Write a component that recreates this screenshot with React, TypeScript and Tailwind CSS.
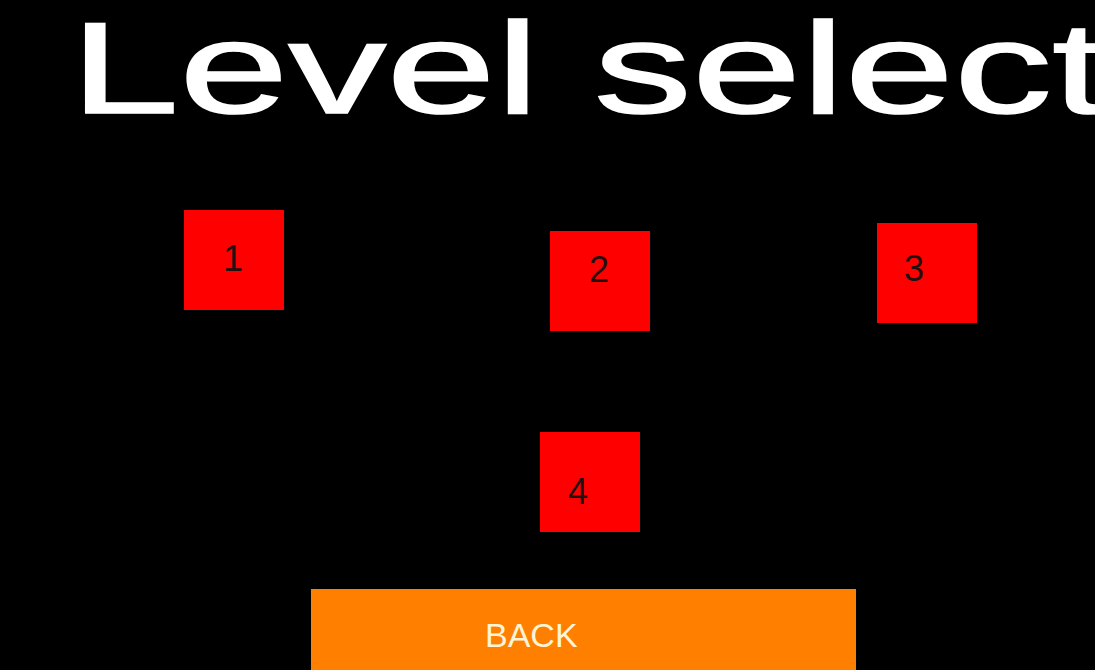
const levels = [
  { id: 1, box: 'left-[184px] top-[60px]', label: 'left-[39px] top-[31px]' },
  { id: 2, box: 'left-[550px] top-[81px]', label: 'left-[39px] top-[21px]' },
  { id: 3, box: 'left-[877px] top-[73px]', label: 'left-[27px] top-[28px]' },
  { id: 4, box: 'left-[540px] top-[282px]', label: 'left-[28px] top-[42px]' },
];

export default function App() {
  return (
    <div className="w-[1095px] h-[670px] overflow-hidden bg-black flex flex-col font-['Liberation_Sans',Arial,sans-serif]">
      {/* Title */}
      <div className="h-[150px] pl-[70px] pt-[3px] shrink-0">
        <h1 className="block w-max origin-left scale-x-[1.51] whitespace-nowrap text-[130px] leading-none font-normal text-white [-webkit-text-stroke:1.5px_#ffffff]">
          Level select
        </h1>
      </div>

      {/* Level nodes, placed on the game canvas */}
      <div className="relative h-[439px] shrink-0">
        {levels.map((lvl) => (
          <button
            key={lvl.id}
            className={`absolute ${lvl.box} w-[100px] h-[100px] bg-[#ff0000]`}
          >
            <span className={`absolute ${lvl.label} text-[36px] leading-none text-[#241010]`}>
              {lvl.id}
            </span>
          </button>
        ))}
      </div>

      {/* Back button */}
      <button className="ml-[311px] w-[545px] h-[100px] shrink-0 bg-[#ff8000] flex items-start pl-[174px] pt-[29px]">
        <span className="text-[34px] leading-none text-[#fff4d6]">BACK</span>
      </button>
    </div>
  );
}
